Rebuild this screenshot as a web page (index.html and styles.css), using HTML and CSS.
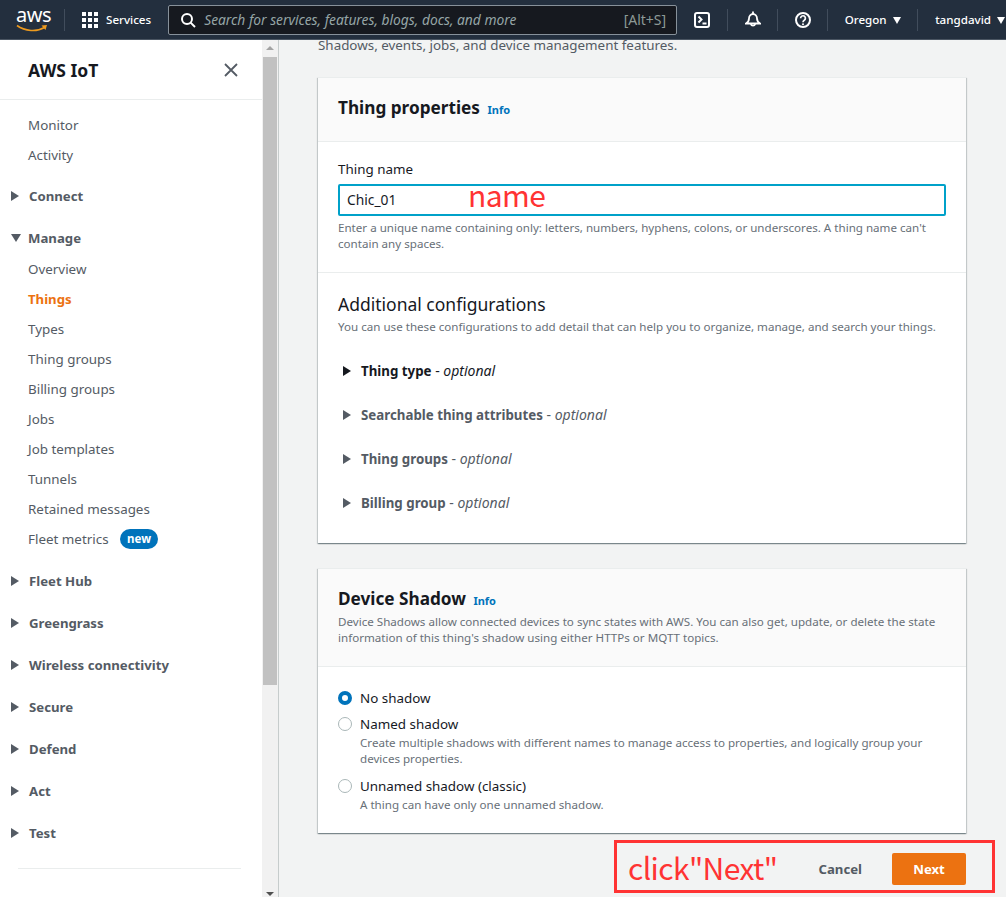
FILE: index.html
```html
<!DOCTYPE html>
<html lang="en">
<head>
  <meta charset="UTF-8" />
  <title>Create thing - AWS IoT</title>
  <link rel="stylesheet" href="styles.css">
</head>
<body>

  <header class="topbar">
    <div class="logo">
      <span class="logo-text">aws</span>
      <svg class="logo-smile" width="32" height="9" viewBox="0 0 32 9"><path d="M1 1.5C9 7.5 21 8 28.5 3.5" fill="none" stroke="#ec9a1f" stroke-width="1.6"/><path d="M25.5 1.5L31 1l-1.5 5z" fill="#ec9a1f"/></svg>
    </div>
    <div class="top-sep"></div>
    <svg class="grid-icon" width="16" height="16" viewBox="0 0 16 16" fill="#fff">
      <rect width="4" height="4"/><rect x="6" width="4" height="4"/><rect x="12" width="4" height="4"/>
      <rect y="6" width="4" height="4"/><rect x="6" y="6" width="4" height="4"/><rect x="12" y="6" width="4" height="4"/>
      <rect y="12" width="4" height="4"/><rect x="6" y="12" width="4" height="4"/><rect x="12" y="12" width="4" height="4"/>
    </svg>
    <span class="top-label services">Services</span>
    <div class="search">
      <svg width="16" height="16" viewBox="0 0 16 16" fill="none" stroke="#fff" stroke-width="2"><circle cx="7" cy="7" r="5"/><path d="M10.600 10.600L15 15"/></svg>
      <span class="search-text">Search for services, features, blogs, docs, and more</span>
      <span class="search-key">[Alt+S]</span>
    </div>
    <div class="top-icon first">
      <svg width="16" height="16" viewBox="0 0 16 16" fill="none" stroke="#fff" stroke-width="2"><rect x="1" y="1" width="14" height="14" rx="2"/><path d="M4.500 4.500l3 3-3 3M8.500 11.500H12.500"/></svg>
    </div>
    <div class="top-sep"></div>
    <div class="top-icon">
      <svg width="16" height="17" viewBox="0 0 16 17" fill="none" stroke="#fff" stroke-width="1.800"><path d="M1 12.500C3.500 11 4 9.500 4 7.500 4 5 5.800 3 8 3s4 2 4 4.500c0 2 .5 3.500 3 5z"/><path d="M8 .5V3M5.800 13a2.300 2.300 0 0 0 4.400 0"/></svg>
    </div>
    <div class="top-sep"></div>
    <div class="top-icon">
      <svg width="16" height="16" viewBox="0 0 16 16" fill="none" stroke="#fff" stroke-width="2"><circle cx="8" cy="8" r="7"/><path d="M5.600 6.200a2.400 2.400 0 1 1 3.700 2C8.400 8.800 8 9.200 8 10.200" stroke-width="1.700"/><circle cx="8" cy="12.200" r="1" fill="#fff" stroke="none"/></svg>
    </div>
    <div class="top-sep"></div>
    <span class="top-label region">Oregon <i class="caret"></i></span>
    <div class="top-sep"></div>
    <span class="top-label user">tangdavid <i class="caret"></i></span>
  </header>

  <div class="page">
    <nav class="sidebar">
      <div class="side-title">
        <span>AWS IoT</span>
        <svg width="14" height="14" viewBox="0 0 14 14" stroke="#545b64" stroke-width="1.800"><path d="M1 1l12 12M13 1L1 13"/></svg>
      </div>
      <ul class="side-list">
        <li class="link">Monitor</li>
        <li class="link">Activity</li>
        <li class="section"><i class="arrow"></i>Connect</li>
        <li class="section"><i class="arrow down"></i>Manage</li>
        <li class="link">Overview</li>
        <li class="link active">Things</li>
        <li class="link">Types</li>
        <li class="link">Thing groups</li>
        <li class="link">Billing groups</li>
        <li class="link">Jobs</li>
        <li class="link">Job templates</li>
        <li class="link">Tunnels</li>
        <li class="link">Retained messages</li>
        <li class="link fleet">Fleet metrics <span class="badge">new</span></li>
        <li class="section"><i class="arrow"></i>Fleet Hub</li>
        <li class="section"><i class="arrow"></i>Greengrass</li>
        <li class="section"><i class="arrow"></i>Wireless connectivity</li>
        <li class="section"><i class="arrow"></i>Secure</li>
        <li class="section"><i class="arrow"></i>Defend</li>
        <li class="section"><i class="arrow"></i>Act</li>
        <li class="section"><i class="arrow"></i>Test</li>
      </ul>
      <div class="side-end"></div>
    </nav>

    <div class="scrollbar">
      <i class="scroll-up"></i>
      <div class="scroll-thumb"></div>
      <i class="scroll-down"></i>
    </div>

    <main class="content">
      <p class="intro">Shadows, events, jobs, and device management features.</p>

      <section class="card">
        <div class="card-head">
          <h2>Thing properties <a class="info">Info</a></h2>
        </div>
        <div class="block name-block">
          <label class="field-label">Thing name</label>
          <div class="input">Chic_01</div>
          <p class="help">Enter a unique name containing only: letters, numbers, hyphens, colons, or underscores. A thing name can't contain any spaces.</p>
        </div>
        <div class="block config-block">
          <h3>Additional configurations</h3>
          <p class="help">You can use these configurations to add detail that can help you to organize, manage, and search your things.</p>
          <ul class="expand-list">
            <li class="dark"><i class="arrow dark-arrow"></i><b>Thing type</b> - <em>optional</em></li>
            <li><i class="arrow"></i><b>Searchable thing attributes</b> - <em>optional</em></li>
            <li><i class="arrow"></i><b>Thing groups</b> - <em>optional</em></li>
            <li><i class="arrow"></i><b>Billing group</b> - <em>optional</em></li>
          </ul>
        </div>
      </section>

      <section class="card shadow-card">
        <div class="card-head shadow-head">
          <h2>Device Shadow <a class="info">Info</a></h2>
          <p class="help">Device Shadows allow connected devices to sync states with AWS. You can also get, update, or delete the state information of this thing's shadow using either HTTPs or MQTT topics.</p>
        </div>
        <div class="block radios">
          <div class="radio-row">
            <i class="radio on"></i>
            <div class="radio-label">No shadow</div>
          </div>
          <div class="radio-row">
            <i class="radio"></i>
            <div>
              <div class="radio-label">Named shadow</div>
              <p class="help">Create multiple shadows with different names to manage access to properties, and logically group your devices properties.</p>
            </div>
          </div>
          <div class="radio-row">
            <i class="radio"></i>
            <div>
              <div class="radio-label">Unnamed shadow (classic)</div>
              <p class="help">A thing can have only one unnamed shadow.</p>
            </div>
          </div>
        </div>
      </section>

      <div class="actions">
        <span class="cancel">Cancel</span>
        <span class="next">Next</span>
      </div>
    </main>
  </div>

  <!-- red notes drawn on top of the screenshot -->
  <span class="note note-name">name</span>
  <div class="note-box"><span class="note note-click">click"Next"</span></div>

</body>
</html>
```

FILE: styles.css
```css
* {
  box-sizing: border-box;
}

html, body {
  margin: 0;
  height: 897px;
  overflow: hidden;
}

body {
  position: relative;
  font-family: "Noto Sans", "Open Sans", sans-serif;
  font-size: 13.400px;
  color: #16191f;
  background-color: #f2f3f3;
}

p, h2, h3, ul {
  margin: 0;
  padding: 0;
}

ul {
  list-style: none;
}

b {
  font-size: 13.300px;
}

/* top bar */
.topbar {
  height: 40px;
  background-color: #232f3e;
  border-bottom: 1px solid #4a5562;
  display: flex;
  align-items: center;
  color: #fff;
}

.logo {
  width: 32px;
  height: 30px;
  margin-left: 16px;
  position: relative;
  flex: none;
}

.logo-text {
  display: block;
  font-size: 20px;
  line-height: 20px;
  letter-spacing: -0.5px;
}

.logo-smile {
  display: block;
  margin-top: -1px;
}

.top-sep {
  width: 1px;
  height: 22px;
  background-color: #414d5c;
  flex: none;
}

.topbar > .logo + .top-sep {
  margin-left: 16px;
}

.grid-icon {
  margin-left: 17px;
  flex: none;
}

.top-label {
  font-size: 11.600px;
  font-weight: 500;
  white-space: nowrap;
}

.services {
  margin-left: 8px;
}

.search {
  margin-left: 17px;
  width: 509px;
  height: 30px;
  background-color: #16191f;
  border: 1px solid #87919a;
  border-radius: 2px;
  display: flex;
  align-items: center;
  padding: 0 10px 0 11px;
  flex: none;
}

.search-text {
  margin-left: 8px;
  font-style: italic;
  font-size: 13.800px;
  color: #95a5a6;
  white-space: nowrap;
  flex: 1;
}

.search-key {
  color: #8d9996;
  font-size: 14px;
}

.top-icon {
  width: 49px;
  display: flex;
  justify-content: center;
  flex: none;
}

.top-icon.first {
  width: 50px;
}

.region {
  width: 89px;
  text-align: center;
}

.user {
  margin-left: 17px;
}

.caret {
  display: inline-block;
  width: 0;
  height: 0;
  margin-left: 3px;
  border-left: 4.500px solid transparent;
  border-right: 4.500px solid transparent;
  border-top: 7px solid #fff;
}

/* page columns */
.page {
  display: flex;
  height: 857px;
}

.sidebar {
  width: 262px;
  background-color: #fff;
  flex: none;
}

.side-title {
  height: 60px;
  border-bottom: 1px solid #eaeded;
  padding: 0 24px 0 28px;
  display: flex;
  align-items: center;
  justify-content: space-between;
  font-size: 17.500px;
  font-weight: 700;
}

.side-list {
  padding-top: 10px;
}

.link {
  height: 30px;
  line-height: 30px;
  padding-left: 28px;
  color: #545b64;
}

.link.active {
  color: #ec7211;
  font-size: 13.200px;
  font-weight: 700;
}

.section {
  height: 42px;
  line-height: 42px;
  padding-left: 11px;
  color: #545b64;
  font-size: 13.200px;
  font-weight: 700;
  display: flex;
  align-items: center;
}

.section .arrow {
  margin-right: 10px;
}

.link + .section {
  margin-top: 5px;
}

.section + .link {
  margin-top: -5px;
}

.fleet + .section {
  margin-top: 6px;
}

.arrow {
  display: inline-block;
  width: 0;
  height: 0;
  border-top: 5.500px solid transparent;
  border-bottom: 5.500px solid transparent;
  border-left: 8px solid #545b64;
}

.arrow.down {
  border-left: 5.500px solid transparent;
  border-right: 5.500px solid transparent;
  border-top: 8px solid #545b64;
  border-bottom: 0;
  margin-right: 7px;
}

.badge {
  display: inline-block;
  margin-left: 8px;
  padding: 0 7px;
  height: 20px;
  line-height: 20px;
  border-radius: 10px;
  background-color: #0073bb;
  color: #fff;
  font-size: 11.500px;
  font-weight: 700;
  vertical-align: 1px;
}

.side-end {
  margin: 14px 21px 0 18px;
  border-top: 1px solid #eaeded;
}

.scrollbar {
  width: 17px;
  background-color: #f1f1f1;
  border-right: 1px solid #c6cccc;
  position: relative;
  flex: none;
  display: flex;
  flex-direction: column;
  align-items: center;
  padding: 0 1px 0 0;
}

.scroll-up {
  margin-top: 6px;
  border-left: 4px solid transparent;
  border-right: 4px solid transparent;
  border-bottom: 4px solid #a3a3a3;
}

.scroll-thumb {
  width: 14px;
  height: 628px;
  margin-top: 7px;
  background-color: #c1c1c1;
}

.scroll-down {
  margin-top: auto;
  margin-bottom: 1px;
  border-left: 4px solid transparent;
  border-right: 4px solid transparent;
  border-top: 4px solid #505050;
}

/* main column */
.content {
  flex: 1;
  padding: 0 40px 0 39px;
  overflow: hidden;
}

.intro {
  color: #545b64;
  line-height: 20px;
  margin-top: -5px;
  height: 42px;
}

.card {
  background-color: #fff;
  border-top: 1px solid #eaeded;
  box-shadow: 0 1px 1px 0 rgba(0, 28, 36, 0.3), 1px 1px 1px 0 rgba(0, 28, 36, 0.15), -1px 1px 1px 0 rgba(0, 28, 36, 0.15);
}

.card-head {
  height: 64px;
  padding: 0 20px 1px;
  background-color: #fafafa;
  border-bottom: 1px solid #eaeded;
  display: flex;
  flex-direction: column;
  justify-content: center;
}

.card-head h2 {
  font-size: 17.200px;
  font-weight: 700;
  line-height: 24px;
}

.info {
  margin-left: 3px;
  font-size: 11px;
  font-weight: 700;
  color: #0073bb;
}

.block {
  padding: 0 20px;
  border-bottom: 1px solid #eaeded;
}

.block:last-child {
  border-bottom: 0;
}

.name-block {
  height: 131px;
  padding-top: 17px;
}

.field-label {
  display: block;
  line-height: 20px;
  color: #16191f;
}

.input {
  margin-top: 5px;
  height: 32px;
  border: 2px solid #00a1c9;
  border-radius: 2px;
  padding-left: 7px;
  line-height: 28px;
  font-size: 13.800px;
}

.help {
  font-size: 11.600px;
  line-height: 15.500px;
  color: #687078;
}

.name-block .help {
  margin-top: 4px;
}

.config-block {
  height: 270px;
  padding-top: 19px;
}

.config-block h3 {
  font-size: 17.500px;
  font-weight: 400;
  line-height: 24px;
}

.config-block .help {
  margin-top: 3px;
}

.expand-list {
  margin-top: 14px;
  padding-left: 5px;
}

.expand-list li {
  height: 44px;
  display: flex;
  align-items: center;
  color: #545b64;
  font-size: 14px;
  white-space: pre;
}

.expand-list li.dark {
  color: #16191f;
}

.expand-list .arrow {
  margin-right: 10px;
}

.expand-list .dark-arrow {
  border-left-color: #16191f;
}

.shadow-card {
  margin-top: 25px;
}

.shadow-head {
  height: 98px;
  justify-content: flex-start;
  padding-top: 18px;
}

.shadow-head .help {
  margin-top: 1px;
}

.radios {
  height: 166px;
  padding-top: 21px;
}

.radio-row {
  display: flex;
  gap: 8px;
  margin-bottom: 6px;
}

.radio-row:nth-child(2) {
  margin-bottom: 10px;
}

.radio {
  width: 14px;
  height: 14px;
  margin-top: 3px;
  border: 1px solid #aab7b8;
  border-radius: 50%;
  background-color: #fff;
  flex: none;
}

.radio.on {
  border: 4px solid #0073bb;
}

.radio-label {
  line-height: 20px;
}

.radios .help {
  margin-top: 1px;
}

.actions {
  margin-top: 20px;
  display: flex;
  justify-content: flex-end;
  align-items: center;
  gap: 30px;
}

.cancel {
  font-size: 13.200px;
  font-weight: 700;
  color: #545b64;
}

.next {
  width: 74px;
  height: 32px;
  line-height: 32px;
  text-align: center;
  background-color: #ec7211;
  border-radius: 2px;
  color: #fff;
  font-size: 13.200px;
  font-weight: 700;
}

/* annotations */
.note {
  color: #ff3333;
  font-family: "Noto Sans CJK SC", "Noto Sans", sans-serif;
  font-size: 30px;
  line-height: 40px;
  letter-spacing: -0.6px;
  white-space: nowrap;
}

.note-name {
  position: absolute;
  left: 468px;
  top: 174px;
}

.note-box {
  position: absolute;
  left: 614px;
  top: 840px;
  width: 381px;
  height: 53px;
  border: 3px solid #ff3333;
}

.note-click {
  position: absolute;
  left: 11px;
  top: 4px;
}
```
